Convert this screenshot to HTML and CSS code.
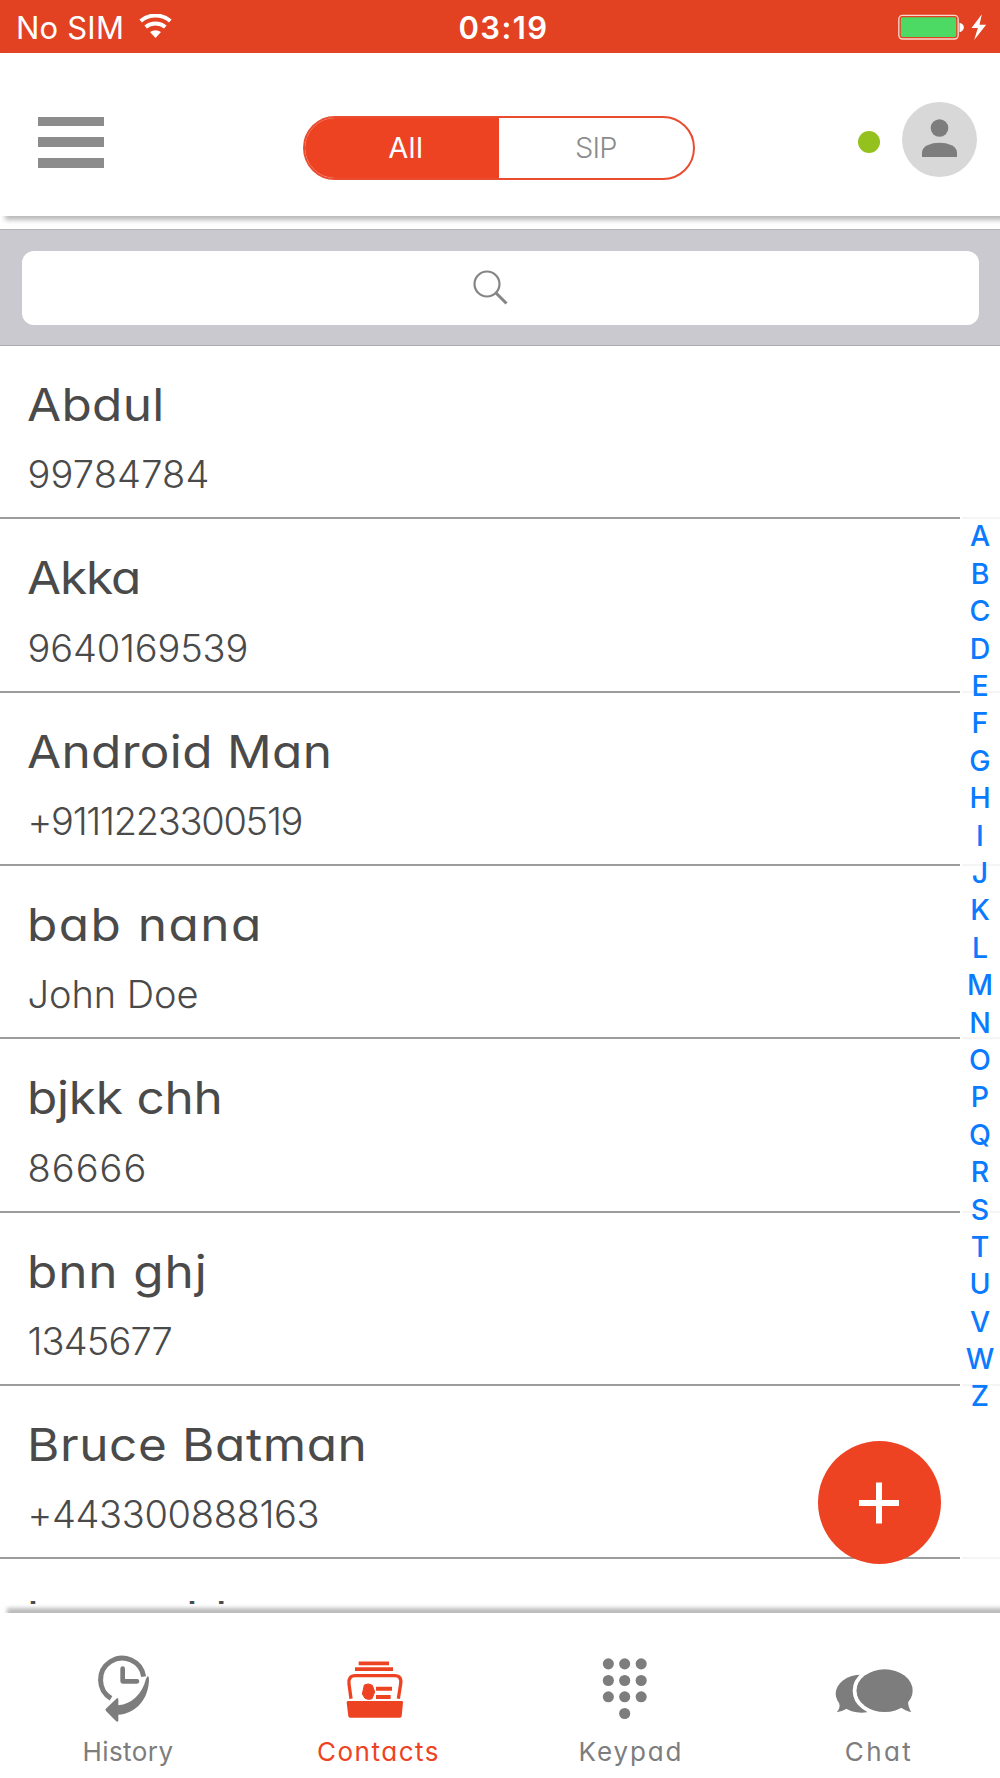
FILE: index.html
```html
<!DOCTYPE html>
<html lang="en">
<head>
<meta charset="utf-8">
<title>Contacts</title>
<link rel="stylesheet" href="styles.css">
</head>
<body>
<div class="app">
  <header class="status-bar">
    <div class="carrier">
      <span class="carrier-name">No SIM</span>
      <svg class="wifi" viewBox="0 0 99 72" aria-hidden="true">
        <path d="M5 21 C30 -1 69 -1 94 21" fill="none" stroke="#fff" stroke-width="12"/>
        <path d="M20 39 C37 25 62 25 79 39" fill="none" stroke="#fff" stroke-width="12"/>
        <path d="M33 54 Q49.500 43 66 54 L49.500 72Z" fill="#fff"/>
      </svg>
    </div>
    <time class="clock">03:19</time>
    <svg class="battery" viewBox="0 0 266 78" aria-hidden="true">
      <rect x="2" y="4" width="178" height="71" rx="11" fill="none" stroke="#fbd9cf" stroke-width="4"/>
      <rect x="8" y="10" width="166" height="59" rx="5" fill="#4cd964"/>
      <path d="M184 26 Q197 29 197 40 Q197 51 184 55Z" fill="#fff"/>
      <path d="M251 1 L220 42 H239 L228 78 L264 32 H244Z" fill="#fff"/>
    </svg>
  </header>

  <nav class="top-bar">
    <button class="menu" aria-label="Menu"><i></i><i></i><i></i></button>
    <div class="segments">
      <button class="segment active"><span>All</span></button>
      <button class="segment"><span>SIP</span></button>
    </div>
    <div class="account">
      <span class="presence"></span>
      <svg class="avatar" viewBox="0 0 75 75" aria-hidden="true">
        <circle cx="37.500" cy="37.500" r="37.500" fill="#d8d8d8"/>
        <circle cx="37.500" cy="26" r="8.800" fill="#7d7d7d"/>
        <path d="M20 55 V50.500 C20 44 29 40.700 37.500 40.700 S55 44 55 50.500 V55Z" fill="#7d7d7d"/>
      </svg>
    </div>
  </nav>

  <div class="search-bar">
    <div class="search-field">
      <svg class="search-icon" viewBox="0 0 36 36" aria-hidden="true">
        <circle cx="14" cy="14" r="12.500" fill="none" stroke="#858587" stroke-width="2.200"/>
        <path d="M23 23 L33.500 33.500" stroke="#858587" stroke-width="3"/>
      </svg>
    </div>
  </div>

  <main class="contacts">
    <ul class="list">
      <li class="row"><div class="name abdul">Abdul</div><div class="detail n1">99784784</div></li>
      <li class="row"><div class="name akka">Akka</div><div class="detail n2">9640169539</div></li>
      <li class="row"><div class="name android">Android Man</div><div class="detail n3">+9111223300519</div></li>
      <li class="row"><div class="name bab">bab nana</div><div class="detail n4">John Doe</div></li>
      <li class="row"><div class="name bjkk">bjkk chh</div><div class="detail n5">86666</div></li>
      <li class="row"><div class="name bnn">bnn ghj</div><div class="detail n6">1345677</div></li>
      <li class="row"><div class="name bruce">Bruce Batman</div><div class="detail n7">+443300888163</div></li>
      <li class="row"><div class="name">bunny hh</div></li>
    </ul>
    <div class="index">
      <span>A</span><span>B</span><span>C</span><span>D</span><span>E</span><span>F</span><span>G</span><span>H</span><span>I</span><span>J</span><span>K</span><span>L</span><span>M</span><span>N</span><span>O</span><span>P</span><span>Q</span><span>R</span><span>S</span><span>T</span><span>U</span><span>V</span><span>W</span><span>Z</span>
    </div>
    <button class="add" aria-label="Add contact">
      <svg viewBox="0 0 42 42" aria-hidden="true"><path d="M1 21 H41 M21 .5 V41.500" stroke="#fff" stroke-width="6"/></svg>
    </button>
  </main>

  <footer class="tab-bar">
    <div class="tab">
      <svg viewBox="225 240 300 240" aria-hidden="true">
        <path d="M431 350 A65 65 0 1 0 333 415" fill="none" stroke="#7d7d7d" stroke-width="15"/>
        <path d="M368 326 V364 H411" fill="none" stroke="#7d7d7d" stroke-width="14" stroke-linecap="round" stroke-linejoin="round"/>
        <path d="M443 348 Q449 350 446 372 C440 425 402 462 355 464 V482 Q353 488 347 482 L318 453 Q314 449 319 445 L349 416 Q355 411 355 419 V436 C395 432 427 402 438 356Z" fill="#7d7d7d" stroke="#fff" stroke-width="7" paint-order="stroke"/>
      </svg>
      <span class="label history">History</span>
    </div>
    <div class="tab active">
      <svg viewBox="975 240 300 240" aria-hidden="true">
        <path d="M1076 310 H1167 M1065 327.500 H1179" stroke="#ee4323" stroke-width="11"/>
        <path d="M1053 416 L1047 372 Q1044 347 1066 347 H1184 Q1206 347 1202 372 L1195 416" fill="none" stroke="#ee4323" stroke-width="10"/>
        <path d="M1093 375 Q1105 368 1117 376 L1124 396 L1116 416 Q1105 421 1095 415 L1087 402Z" fill="#ee4323" stroke="#ee4323" stroke-width="3" stroke-linejoin="round"/>
        <path d="M1128 386 H1176 M1128 411 H1172" stroke="#ee4323" stroke-width="12"/>
        <path d="M1044 423 H1206 Q1210 423 1209 428 L1205 469 Q1204 473 1200 473 H1050 Q1046 473 1045 469 L1040 428 Q1039 423 1044 423Z" fill="#ee4323"/>
      </svg>
      <span class="label contacts-label">Contacts</span>
    </div>
    <div class="tab">
      <svg viewBox="225 720 300 245" aria-hidden="true">
        <g fill="#7d7d7d">
          <circle cx="324" cy="793" r="17"/><circle cx="374" cy="793" r="17"/><circle cx="424.500" cy="793" r="17"/>
          <circle cx="324" cy="844" r="17"/><circle cx="374" cy="844" r="17"/><circle cx="424.500" cy="844" r="17"/>
          <circle cx="324" cy="894" r="17"/><circle cx="374" cy="894" r="17"/><circle cx="424.500" cy="894" r="17"/>
          <circle cx="374" cy="945" r="17"/>
        </g>
      </svg>
      <span class="label keypad">Keypad</span>
    </div>
    <div class="tab">
      <svg viewBox="975 720 300 240" aria-hidden="true">
        <g fill="#7d7d7d">
          <ellipse cx="1085" cy="881" rx="78" ry="57"/>
          <path d="M1016 908 Q1024 921 1010 937 Q1026 934 1040 926Z"/>
          <ellipse cx="1154" cy="872" rx="90" ry="70" fill="none" stroke="#fff" stroke-width="12"/>
          <ellipse cx="1154" cy="872" rx="84" ry="64"/>
          <path d="M1224 902 Q1224 921 1234 936 Q1219 934 1201 922Z"/>
        </g>
      </svg>
      <span class="label chat">Chat</span>
    </div>
  </footer>
</div>
</body>
</html>
```
FILE: styles.css
```css
* { box-sizing: border-box; }

body {
  margin: 0;
  background: #fff;
  font-family: Inter, "Open Sans", sans-serif;
  font-feature-settings: "cv11";
}

button {
  padding: 0;
  border: 0;
  background: none;
  font: inherit;
  color: inherit;
}

.app {
  display: flex;
  flex-direction: column;
  width: 1000px;
  height: 1778px;
  overflow: hidden;
}

/* Status bar */
.status-bar {
  flex: none;
  display: grid;
  grid-template-columns: 1fr auto 1fr;
  height: 53.330px;
  padding: 0 13px 0 16px;
  background: #e24122;
  color: #fff;
  font-size: 31px;
  line-height: 33px;
}
.carrier { display: flex; padding-top: 11px; }
.carrier-name { letter-spacing: .2px; }
.wifi { width: 33px; height: 24px; margin: 3px 0 0 15px; }
.clock {
  padding-top: 11px;
  font-weight: 600;
  letter-spacing: 1.4px;
  transform: translateX(2px);
}
.battery {
  justify-self: end;
  width: 89px;
  height: 26px;
  margin-top: 14px;
}

/* Top bar */
.top-bar {
  flex: none;
  display: grid;
  grid-template-columns: 1fr 392px 1fr;
  height: 162.670px;
  padding: 0 23px 0 37.500px;
  z-index: 1;
  background: #fff;
  box-shadow: 5px 4px 5px 0 #b8b8b8;
}
.menu {
  display: flex;
  flex-direction: column;
  gap: 11px;
  width: 67px;
  margin-top: 63.400px;
  align-self: start;
}
.menu i { width: 66px; height: 9.700px; background: #8c8c8c; }
.segments {
  display: flex;
  height: 64px;
  margin: 63px 8.500px 0 -8.500px;
  width: 392px;
  border: 2px solid #ea4c30;
  border-radius: 32px;
  overflow: hidden;
}
.segment {
  flex: 1;
  color: #8c8c8c;
  font-size: 29px;
  font-weight: 300;
  line-height: 56px;
  letter-spacing: -.9px;
}
.segment.active {
  flex: none;
  width: 194px;
  padding-left: 8px;
  background: #ee4323;
  color: #fff;
  font-weight: 400;
  letter-spacing: .3px;
}
.account {
  display: flex;
  align-items: center;
  justify-content: flex-end;
  gap: 22px;
  height: 75px;
  margin-top: 49px;
}
.presence {
  width: 22px;
  height: 22px;
  margin-top: 4px;
  border-radius: 50%;
  background: #95c11f;
}
.avatar { width: 75px; height: 75px; }

/* Search */
.search-bar {
  flex: none;
  height: 117px;
  margin-top: 13px;
  padding: 21px 21.500px 0;
  border-top: 1px solid #b3b2b7;
  border-bottom: 1px solid #adacb0;
  background: #cac9cf;
}
.search-field {
  height: 74.500px;
  padding: 19.500px 0 0 451.500px;
  border-radius: 12px;
  background: #fff;
}
.search-icon { display: block; width: 36px; height: 36px; }

/* Contact list */
.contacts {
  position: relative;
  flex: none;
  display: flex;
  height: 1258px;
  overflow: hidden;
}
.list {
  width: 960px;
  margin: 0;
  padding: 0;
  list-style: none;
}
.row {
  height: 173.330px;
  padding: 34px 0 0 27px;
  border-bottom: 2px solid #9c9c9c;
  color: #4a4a4a;
}
/* Names are set slightly extended */
.name {
  font-size: 45px;
  line-height: 50px;
  white-space: nowrap;
  transform: scaleX(1.1);
  transform-origin: left;
}
.detail {
  margin-top: 22.500px;
  padding-left: .5px;
  font-size: 38px;
  font-weight: 300;
  line-height: 44px;
  white-space: nowrap;
}
.abdul { letter-spacing: .270px; }
.akka { letter-spacing: -1px; }
.android { letter-spacing: .3px; }
.bab { letter-spacing: 1.350px; }
.bjkk { letter-spacing: -.2px; }
.bnn { letter-spacing: .8px; }
.bruce { letter-spacing: .550px; }
.n1 { letter-spacing: .17px; }
.n2 { letter-spacing: -.15px; }
.n3 { letter-spacing: -1.280px; }
.n4 { letter-spacing: -.05px; }
.n5 { letter-spacing: 1.050px; }
.n6 { letter-spacing: -.88px; }
.n7 { letter-spacing: -.34px; }

.index {
  display: flex;
  flex-direction: column;
  width: 38px;
  margin-left: 2px;
  padding: 171.500px 2px 0 0;
  background: repeating-linear-gradient(transparent 0 171.330px, #f5f5f5 171.330px 173.330px);
  color: #0a7aff;
  font-size: 28.500px;
  font-weight: 550;
  text-align: center;
}
.index span { flex: none; height: 37.400px; line-height: 37.400px; }
.index span:nth-child(13), .index span:nth-child(23) { margin: 0 -2px; }

.add {
  position: absolute;
  left: 817.500px;
  top: 1095.500px;
  display: grid;
  place-items: center;
  width: 123px;
  height: 123px;
  border-radius: 50%;
  background: #ee4323;
}
.add svg { width: 42px; height: 42px; }

/* Tab bar */
.tab-bar {
  flex: 1;
  display: grid;
  grid-template-columns: repeat(4, 250px);
  margin-top: 9px;
  background: #fff;
  box-shadow: 7px -5px 4px 0 #bcbcbc;
}
.tab {
  display: flex;
  flex-direction: column;
  align-items: center;
  padding-top: 27px;
  color: #7d7d7d;
}
.tab.active { color: #ee4323; }
.tab svg { width: 100px; height: 80px; overflow: visible; }
.label {
  margin-top: 16.500px;
  padding-left: 6px;
  font-size: 26px;
  line-height: 32px;
}
.history { letter-spacing: .44px; }
.contacts-label { letter-spacing: 1.500px; padding-left: 7px; }
.keypad { letter-spacing: 1.900px; padding-left: 12px; }
.chat { letter-spacing: 2.400px; padding-left: 8px; }
```
